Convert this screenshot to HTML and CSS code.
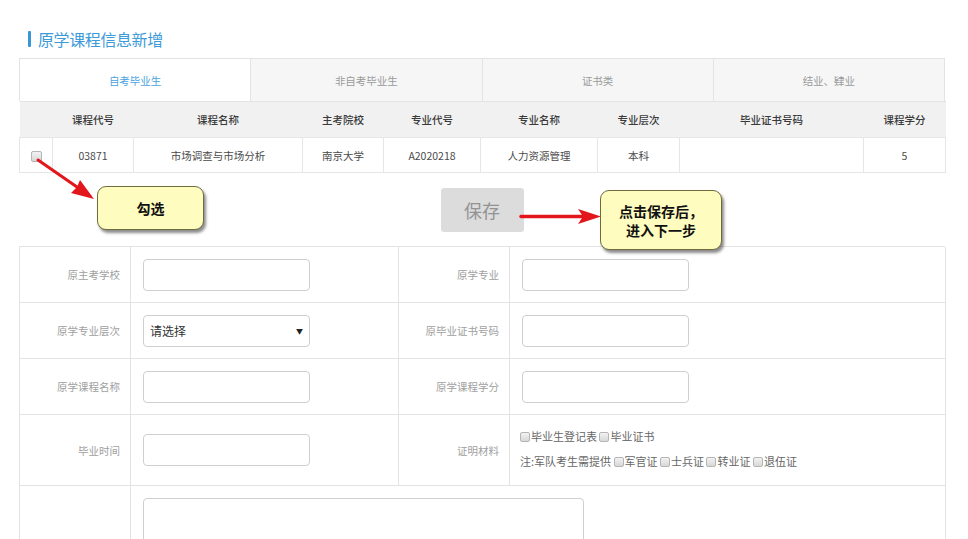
FILE: index.html
```html
<!DOCTYPE html>
<html lang="zh-CN">
<head>
<meta charset="utf-8">
<title>原学课程信息新增</title>
<link rel="stylesheet" href="styles.css">
</head>
<body>
<div class="page">
  <div class="title"><span class="title-bar"></span><span class="title-text">原学课程信息新增</span></div>

  <div class="tabs">
    <div class="tab active">自考毕业生</div>
    <div class="tab">非自考毕业生</div>
    <div class="tab">证书类</div>
    <div class="tab">结业、肄业</div>
  </div>

  <table class="grid">
    <colgroup>
      <col class="c-chk"><col class="c-code"><col class="c-name"><col class="c-school"><col class="c-mcode"><col class="c-mname"><col class="c-level"><col class="c-cert"><col class="c-credit">
    </colgroup>
    <thead>
      <tr><th></th><th>课程代号</th><th>课程名称</th><th>主考院校</th><th>专业代号</th><th>专业名称</th><th>专业层次</th><th>毕业证书号码</th><th>课程学分</th></tr>
    </thead>
    <tbody>
      <tr><td><span class="chk"></span></td><td>03871</td><td>市场调查与市场分析</td><td>南京大学</td><td>A2020218</td><td>人力资源管理</td><td>本科</td><td></td><td>5</td></tr>
    </tbody>
  </table>

  <div class="actions">
    <button class="save" type="button">保存</button>
  </div>

  <div class="form">
    <div class="lbl">原主考学校</div>
    <div class="fld"><input class="inp" type="text"></div>
    <div class="lbl">原学专业</div>
    <div class="fld"><input class="inp" type="text"></div>

    <div class="lbl">原学专业层次</div>
    <div class="fld"><div class="select"><span>请选择</span><span class="caret">▼</span></div></div>
    <div class="lbl">原毕业证书号码</div>
    <div class="fld"><input class="inp" type="text"></div>

    <div class="lbl">原学课程名称</div>
    <div class="fld"><input class="inp" type="text"></div>
    <div class="lbl">原学课程学分</div>
    <div class="fld"><input class="inp" type="text"></div>

    <div class="lbl tall">毕业时间</div>
    <div class="fld tall"><input class="inp" type="text"></div>
    <div class="lbl tall">证明材料</div>
    <div class="fld tall checks">
      <div class="check-line"><span class="chk sm"></span>毕业生登记表 <span class="chk sm"></span>毕业证书</div>
      <div class="check-line">注:军队考生需提供 <span class="chk sm"></span>军官证 <span class="chk sm"></span>士兵证 <span class="chk sm"></span>转业证 <span class="chk sm"></span>退伍证</div>
    </div>

    <div class="lbl last"></div>
    <div class="fld last wide"><div class="textarea"></div></div>
  </div>

  <svg class="arrows" width="968" height="539" viewBox="0 0 968 539" aria-hidden="true">
    <line x1="38" y1="160" x2="77" y2="187" stroke="#e3161c" stroke-width="3" stroke-linecap="round"/>
    <polygon points="94,199 71,193 77,187 80,180" fill="#e3161c"/>
    <line x1="521" y1="216.5" x2="582" y2="216.5" stroke="#e3161c" stroke-width="3.5" stroke-linecap="round"/>
    <polygon points="601,216.5 578,209 583,216.5 578,224" fill="#e3161c"/>
  </svg>

  <div class="callout callout-check">勾选</div>
  <div class="callout callout-save">点击保存后，<br>进入下一步</div>
</div>
</body>
</html>
```

FILE: styles.css
```css
* { box-sizing: border-box; }

html, body {
  margin: 0;
  padding: 0;
  background: #ffffff;
}

body {
  font-family: "Noto Sans CJK SC", "Noto Sans", "Liberation Sans", sans-serif;
  color: #555;
  width: 968px;
  height: 539px;
  overflow: hidden;
}

.page {
  position: relative;
  padding: 29px 23px 0 19px;
}

/* title */
.title {
  display: flex;
  align-items: center;
  height: 20px;
  margin-bottom: 9px;
}
.title-bar {
  width: 3px;
  height: 16px;
  margin-left: 9px;
  background: #3a97d6;
  border-radius: 1px;
}
.title-text {
  margin-left: 7px;
  font-size: 16px;
  line-height: 20px;
  color: #3d9bd9;
  letter-spacing: -0.4px;
}

/* tabs */
.tabs {
  display: flex;
  height: 43px;
  border: 1px solid #e3e3e3;
  border-bottom: none;
}
.tab {
  flex: 1;
  display: flex;
  align-items: center;
  justify-content: center;
  font-size: 10.5px;
  color: #9a9a9a;
  background: #f6f6f6;
  border-left: 1px solid #e3e3e3;
}
.tab:first-child { border-left: none; }
.tab.active {
  background: #ffffff;
  color: #4aa3df;
}

/* table */
.grid {
  width: 926px;
  border-collapse: collapse;
  table-layout: fixed;
  font-size: 10.5px;
}
.c-chk { width: 33px; }
.c-code { width: 81px; }
.c-name { width: 169px; }
.c-school { width: 81px; }
.c-mcode { width: 97px; }
.c-mname { width: 117px; }
.c-level { width: 82px; }
.c-cert { width: 184px; }
.c-credit { width: 82px; }

.grid th {
  height: 36px;
  background: #f1f1f1;
  color: #3a3a3a;
  font-weight: 500;
  text-align: center;
  padding: 0;
  border-top: 1px solid #e3e3e3;
}
.grid td {
  height: 35px;
  text-align: center;
  padding: 0;
  color: #4a4a4a;
  border: 1px solid #e6e6e6;
}

.chk {
  display: inline-block;
  width: 11px;
  height: 11px;
  border: 1px solid #b5b5b5;
  border-radius: 2px;
  background: linear-gradient(#f2f2f2, #d8d8d8);
  vertical-align: middle;
}
.chk.sm {
  width: 10px;
  height: 10px;
  margin-right: 1px;
  vertical-align: -1px;
}

/* actions */
.actions {
  height: 73px;
  display: flex;
  justify-content: center;
  padding-top: 15px;
}
.save {
  width: 83px;
  height: 44px;
  border: none;
  border-radius: 3px;
  background: #dcdcdc;
  color: #939393;
  font-family: inherit;
  font-size: 18px;
  padding: 0;
}

/* form */
.form {
  display: grid;
  grid-template-columns: 111px 268px 111px 436px;
  grid-template-rows: 56px 56px 56px 71px 55px;
  border-top: 1px solid #e3e3e3;
  border-left: 1px solid #e3e3e3;
}
.lbl, .fld {
  border-right: 1px solid #e3e3e3;
  border-bottom: 1px solid #e3e3e3;
  display: flex;
  align-items: center;
}
.lbl {
  justify-content: flex-end;
  padding-right: 10px;
  font-size: 10.5px;
  color: #a0a0a0;
}
.fld {
  padding-left: 12px;
}
.inp {
  width: 167px;
  height: 32px;
  border: 1px solid #cfcfcf;
  border-radius: 4px;
  background: #fff;
  margin: 0;
}
.select {
  width: 167px;
  height: 32px;
  border: 1px solid #cfcfcf;
  border-radius: 4px;
  display: flex;
  align-items: center;
  justify-content: space-between;
  padding: 0 6px 0 6px;
  font-size: 12px;
  color: #333;
}
.caret {
  font-size: 7px;
  color: #222;
}

.checks {
  flex-direction: column;
  align-items: flex-start;
  justify-content: center;
  gap: 8px;
  padding-left: 10px;
  padding-bottom: 2px;
  font-size: 11px;
  color: #666;
}
.check-line {
  line-height: 17px;
  white-space: nowrap;
}

.last {
  border-bottom: none;
  overflow: hidden;
}
.wide {
  grid-column: 2 / 5;
  align-items: flex-start;
  padding-top: 12px;
}
.textarea {
  flex: none;
  width: 441px;
  height: 60px;
  border: 1px solid #cfcfcf;
  border-radius: 4px;
}

/* overlays */
.arrows {
  position: absolute;
  left: 0;
  top: 0;
  pointer-events: none;
}
.callout {
  position: absolute;
  background: #fffcc0;
  border: 1.5px solid #6f6b3c;
  border-radius: 9px;
  box-shadow: 2px 3px 3px rgba(0, 0, 0, 0.45);
  color: #111;
  font-size: 14px;
  font-weight: 700;
  text-align: center;
  display: flex;
  align-items: center;
  justify-content: center;
}
.callout-check {
  left: 97px;
  top: 186px;
  width: 107px;
  height: 44px;
}
.callout-save {
  left: 600px;
  top: 190px;
  width: 122px;
  height: 60px;
  line-height: 19px;
  padding-top: 2px;
}
```
